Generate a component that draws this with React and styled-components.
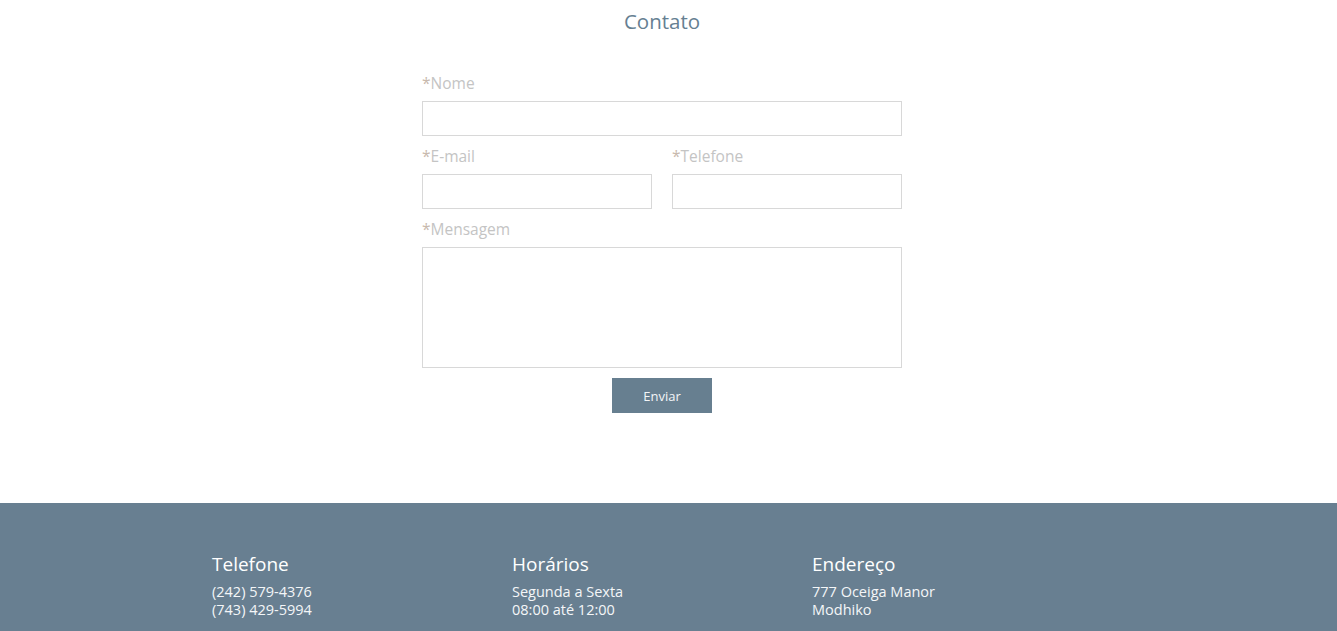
import styled, { createGlobalStyle } from "styled-components";

const GlobalStyle = createGlobalStyle`
  body {
    margin: 0;
    background: #ffffff;
    font-family: "Open Sans", "Liberation Sans", sans-serif;
  }
`;

const Page = styled.div`
  display: flex;
  flex-direction: column;
  min-height: 631px;
`;

const ContactSection = styled.section`
  display: flex;
  flex-direction: column;
  align-items: center;
  height: 503px;
  box-sizing: border-box;
  padding-top: 8px;
  padding-right: 13px;
`;

const Title = styled.h2`
  margin: 0;
  font-size: 20.5px;
  font-weight: 400;
  line-height: 26px;
  color: #667f92;
`;

const Form = styled.form`
  width: 480px;
  margin-top: 39px;
  display: flex;
  flex-direction: column;
`;

const Row = styled.div`
  display: grid;
  grid-template-columns: 1fr 1fr;
  column-gap: 20px;
`;

const Field = styled.div`
  display: flex;
  flex-direction: column;
`;

const Label = styled.label`
  font-size: 15.5px;
  line-height: 20px;
  color: #c4c4c4;
  margin-bottom: 8px;

  span {
    color: #c8b9ae;
  }
`;

const Input = styled.input`
  box-sizing: border-box;
  height: 35px;
  border: 1px solid #d8d8d8;
  margin-bottom: 10px;
  outline: none;
`;

const TextArea = styled.textarea`
  box-sizing: border-box;
  height: 121px;
  border: 1px solid #d8d8d8;
  resize: none;
  outline: none;
`;

const Button = styled.button`
  align-self: center;
  margin-top: 10px;
  width: 100px;
  height: 35px;
  border: none;
  background: #677f90;
  color: #f3f5f7;
  font-family: "Open Sans", "Liberation Sans", sans-serif;
  font-size: 13px;
`;

const Footer = styled.footer`
  flex: 1;
  background: #687f91;
  padding-top: 48px;
  padding-bottom: 12px;
`;

const FooterInner = styled.div`
  width: 913px;
  margin: 0 auto;
  display: grid;
  grid-template-columns: 300px 300px 300px;
`;

const FooterCol = styled.div`
  color: #ffffff;
`;

const FooterTitle = styled.h3`
  margin: 0 0 5px;
  font-size: 19px;
  font-weight: 400;
  line-height: 26px;
`;

const FooterLine = styled.div`
  font-size: 14.5px;
  line-height: 18px;
  color: #f4f6f8;
  position: relative;
  top: 1px;
`;

const Required = ({ children }) => (
  <Label>
    <span>*</span>
    {children}
  </Label>
);

const columns = [
  { title: "Telefone", lines: ["(242) 579-4376", "(743) 429-5994"] },
  { title: "Horários", lines: ["Segunda a Sexta", "08:00 até 12:00"] },
  { title: "Endereço", lines: ["777 Oceiga Manor", "Modhiko"] },
];

export default function App() {
  return (
    <Page>
      <GlobalStyle />
      <ContactSection>
        <Title>Contato</Title>
        <Form onSubmit={(e) => e.preventDefault()}>
          <Field>
            <Required>Nome</Required>
            <Input type="text" />
          </Field>
          <Row>
            <Field>
              <Required>E-mail</Required>
              <Input type="email" />
            </Field>
            <Field>
              <Required>Telefone</Required>
              <Input type="tel" />
            </Field>
          </Row>
          <Field>
            <Required>Mensagem</Required>
            <TextArea />
          </Field>
          <Button type="submit">Enviar</Button>
        </Form>
      </ContactSection>
      <Footer>
        <FooterInner>
          {columns.map((c) => (
            <FooterCol key={c.title}>
              <FooterTitle>{c.title}</FooterTitle>
              {c.lines.map((l) => (
                <FooterLine key={l}>{l}</FooterLine>
              ))}
            </FooterCol>
          ))}
        </FooterInner>
      </Footer>
    </Page>
  );
}
